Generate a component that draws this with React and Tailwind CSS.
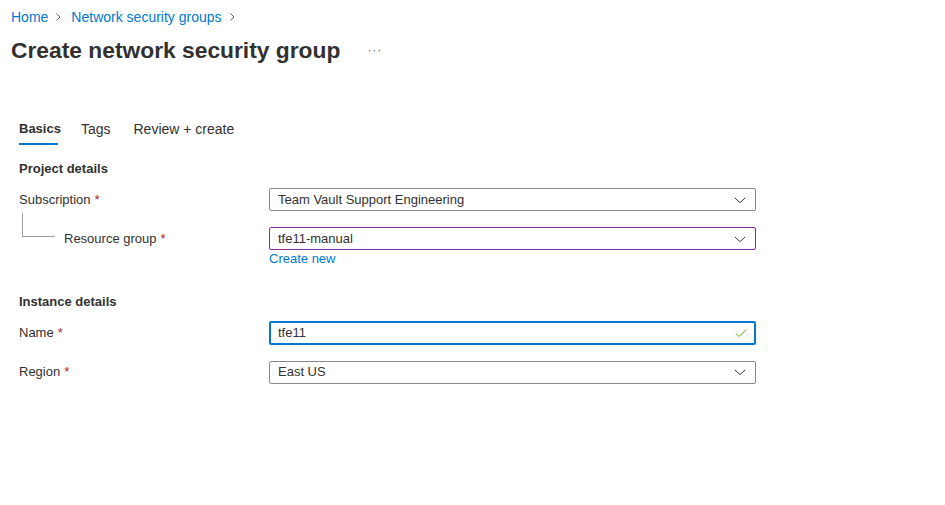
import React from 'react';

const Chevron = () => (
    <svg width="14" height="14" viewBox="0 0 16 16" className="text-[#323130]">
        <path d="M2 5.5 L8 11 L14 5.5" fill="none" stroke="currentColor" strokeWidth="1.1" />
    </svg>
);

const Crumb = () => (
    <svg width="8" height="10" viewBox="0 0 8 10" className="text-[#605e5c]">
        <path d="M2.5 1.5 L6 5 L2.5 8.5" fill="none" stroke="currentColor" strokeWidth="1" />
    </svg>
);

const Star = () => <span className="text-[#a4262c] ml-1">*</span>;

const Select = ({ value, border = "border border-[#8a8886]" }) => (
    <div className={`w-[487px] h-[23px] ${border} rounded-[2px] flex items-center justify-between pl-2 pr-2 bg-white`}>
        <span>{value}</span>
        <Chevron />
    </div>
);

const App = () => {
    return (
        <div className="w-[945px] h-[505px] bg-white text-[#323130] text-[13px] font-['Liberation_Sans',sans-serif]">
            {/* breadcrumb */}
            <div className="flex items-center pl-[11px] pt-[9px] text-[#0078d4] text-[14px] leading-4">
                <span>Home</span>
                <span className="ml-[6px] mr-[9px] flex"><Crumb /></span>
                <span>Network security groups</span>
                <span className="ml-[6px] flex"><Crumb /></span>
            </div>
            <div className="flex items-center pl-[11px] mt-[10px] h-[30px]">
                <h1 className="text-[22.8px] font-semibold">Create network security group</h1>
                <span className="ml-[27px] text-[#605e5c] text-[12px] tracking-[1px]">···</span>
            </div>

            {/* tabs */}
            <div className="flex pl-[19px] mt-[54px] text-[14px]">
                <div className="flex flex-col">
                    <span className="font-semibold text-[13px] leading-5">Basics</span>
                    <div className="h-[2px] bg-[#0078d4] mt-[4px] w-[39px]"></div>
                </div>
                <span className="ml-[20px] leading-5">Tags</span>
                <span className="ml-[23px] leading-5">Review + create</span>
            </div>

            <div className="pl-[19px] mt-[14px]">
                <h2 className="font-semibold text-[13px] h-[20px] leading-5">Project details</h2>

                <div className="flex items-center mt-[9px]">
                    <div className="w-[250px]">Subscription<Star /></div>
                    <Select value="Team Vault Support Engineering" />
                </div>

                <div className="flex mt-[2px]">
                    <div className="w-[250px] flex">
                        <div className="ml-[3px] w-[33px] h-[24px] border-l border-b border-[#a19f9d]"></div>
                        <div className="ml-[9px] mt-[16px]">Resource group<Star /></div>
                    </div>
                    <div className="mt-[14px]">
                        <Select value="tfe11-manual" border="border border-[#8a2da5]" />
                        <div className="text-[#0078d4] mt-[-1px]">Create new</div>
                    </div>
                </div>

                <h2 className="font-semibold text-[13px] mt-[23px] h-[20px] leading-5">Instance details</h2>

                <div className="flex items-center mt-[9px]">
                    <div className="w-[250px]">Name<Star /></div>
                    <div className="w-[487px] h-[24px] border-2 border-[#0078d4] rounded-[2px] flex items-center justify-between pl-[7px] pr-[6px]">
                        <span>tfe11</span>
                        <svg width="14" height="14" viewBox="0 0 16 16">
                            <path d="M2 8.5 L6 12 L14 4" fill="none" stroke="#57a300" strokeWidth="1.1" />
                        </svg>
                    </div>
                </div>

                <div className="flex items-center mt-[16px]">
                    <div className="w-[250px]">Region<Star /></div>
                    <Select value="East US" />
                </div>
            </div>
        </div>
    );
};

export default App;
